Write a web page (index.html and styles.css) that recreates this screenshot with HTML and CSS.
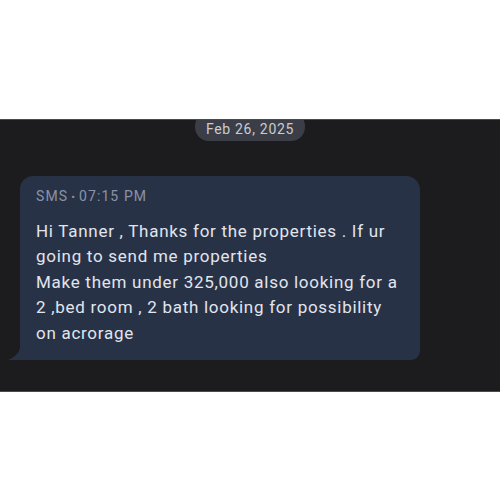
FILE: index.html
```html
<!DOCTYPE html>
<html>
<head>
<meta charset="utf-8">
<link rel="stylesheet" href="styles.css">
</head>
<body>
<div class="band">
  <div class="date">Feb 26, 2025</div>
  <div class="bubble">
    <div class="meta">SMS<span class="dot">•</span>07:15 PM</div>
    <div class="msg">Hi Tanner , Thanks for the properties . If ur<br>going to send me properties<br>Make them under 325,000 also looking for a<br>2 ,bed room , 2 bath looking for possibility<br>on acrorage</div>
    <svg class="tail" width="14" height="12" viewBox="0 0 14 12"><path d="M12 0 L14 0 L14 12 L0 12 Q10 8 12 0 Z" fill="#283246"/></svg>
  </div>
</div>
</body>
</html>
```
FILE: styles.css
```css
html, body {
  margin: 0;
  padding: 0;
  background: #ffffff;
}
body {
  font-family: Roboto, "Noto Sans", sans-serif;
}
.band {
  margin-top: 119px;
  height: 271px;
  background: #1c1c1e;
  border-top: 1px solid #4a4a4c;
  border-bottom: 1px solid #4a4a4c;
  overflow: hidden;
  display: flex;
  flex-direction: column;
  align-items: flex-start;
}
.date {
  align-self: center;
  margin-top: -8px;
  height: 29px;
  box-sizing: border-box;
  padding: 9px 11px 0;
  border-radius: 14px;
  background: #3b3e47;
  color: #c9ccd3;
  font-size: 14px;
  letter-spacing: 0.7px;
  line-height: 17px;
}
.bubble {
  position: relative;
  margin: 35px 0 0 20px;
  width: 400px;
  height: 184px;
  box-sizing: border-box;
  padding: 11px 10px 0 16px;
  background: #283246;
  border-radius: 13px 14px 9px 0;
}
.meta {
  color: #8a93a6;
  font-size: 14px;
  line-height: 18px;
  letter-spacing: 1.1px;
}
.dot {
  margin: 0 3px 0 3px;
  font-size: 11px;
}
.msg {
  margin-top: 12px;
  color: #e1e5ee;
  font-size: 17px;
  line-height: 25.4px;
  letter-spacing: 0.72px;
  white-space: nowrap;
}
.tail {
  position: absolute;
  left: -12px;
  bottom: 0;
}
```
